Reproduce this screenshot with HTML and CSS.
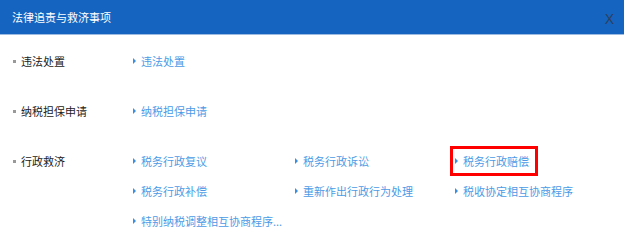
FILE: index.html
```html
<!DOCTYPE html>
<html lang="zh-CN">

<head>
    <meta charset="UTF-8">
    <meta name="viewport" content="width=device-width, initial-scale=1.0">
    <title>法律追责与救济事项</title>
    <link rel="stylesheet" href="styles.css">
</head>

<body>

    <div class="dialog">
        <div class="dialog-header">
            <span class="dialog-title">法律追责与救济事项</span>
            <span class="dialog-close">X</span>
        </div>

        <div class="dialog-body">
            <div class="item-row">
                <div class="item-label">违法处置</div>
                <div class="item-links">
                    <a href="#" class="link">违法处置</a>
                </div>
            </div>

            <div class="item-row">
                <div class="item-label">纳税担保申请</div>
                <div class="item-links">
                    <a href="#" class="link">纳税担保申请</a>
                </div>
            </div>

            <div class="item-row">
                <div class="item-label">行政救济</div>
                <div class="item-links">
                    <a href="#" class="link">税务行政复议</a>
                    <a href="#" class="link">税务行政诉讼</a>
                    <a href="#" class="link active">税务行政赔偿</a>
                    <a href="#" class="link">税务行政补偿</a>
                    <a href="#" class="link">重新作出行政行为处理</a>
                    <a href="#" class="link">税收协定相互协商程序</a>
                    <a href="#" class="link">特别纳税调整相互协商程序...</a>
                </div>
            </div>
        </div>
    </div>

</body>

</html>
```

FILE: styles.css
```css
* {
    margin: 0;
    padding: 0;
    box-sizing: border-box;
}

body {
    font-family: "Noto Sans CJK SC", "Microsoft YaHei", sans-serif;
    font-size: 11px;
    background: #fff;
    color: #222;
    width: 624px;
    height: 244px;
    overflow: hidden;
}

.dialog-header {
    height: 35px;
    background-color: #1565c0;
    border-bottom: 1px solid #9dbbe0;
    display: flex;
    align-items: center;
    justify-content: space-between;
    padding: 0 10px 0 12px;
}

.dialog-title {
    color: #fff;
    font-size: 11px;
    line-height: 1;
}

.dialog-close {
    font-family: "Liberation Sans", Arial, sans-serif;
    font-size: 14px;
    color: #2e3f5e;
    margin-top: 4px;
}

.dialog-body {
    padding-top: 16px;
}

.item-row {
    display: flex;
    margin-bottom: 30px;
}

.item-row:last-child {
    margin-bottom: 0;
}

.item-label {
    width: 133px;
    padding-left: 21px;
    position: relative;
    line-height: 20px;
}

.item-label::before {
    content: "";
    position: absolute;
    left: 13px;
    top: 9px;
    width: 3px;
    height: 3px;
    background: #999;
}

.item-links {
    display: grid;
    grid-template-columns: 162px 160px 160px;
    row-gap: 10px;
}

.link {
    justify-self: start;
    position: relative;
    padding: 0 4px 0 8px;
    line-height: 20px;
    color: #4c9be6;
    text-decoration: none;
    white-space: nowrap;
}

.link::before {
    content: "";
    position: absolute;
    left: 0;
    top: 7px;
    border-left: 3px solid #3a8ee0;
    border-top: 3px solid transparent;
    border-bottom: 3px solid transparent;
}

.link.active {
    outline: 3px solid #f00;
    outline-offset: 2px;
}
```
